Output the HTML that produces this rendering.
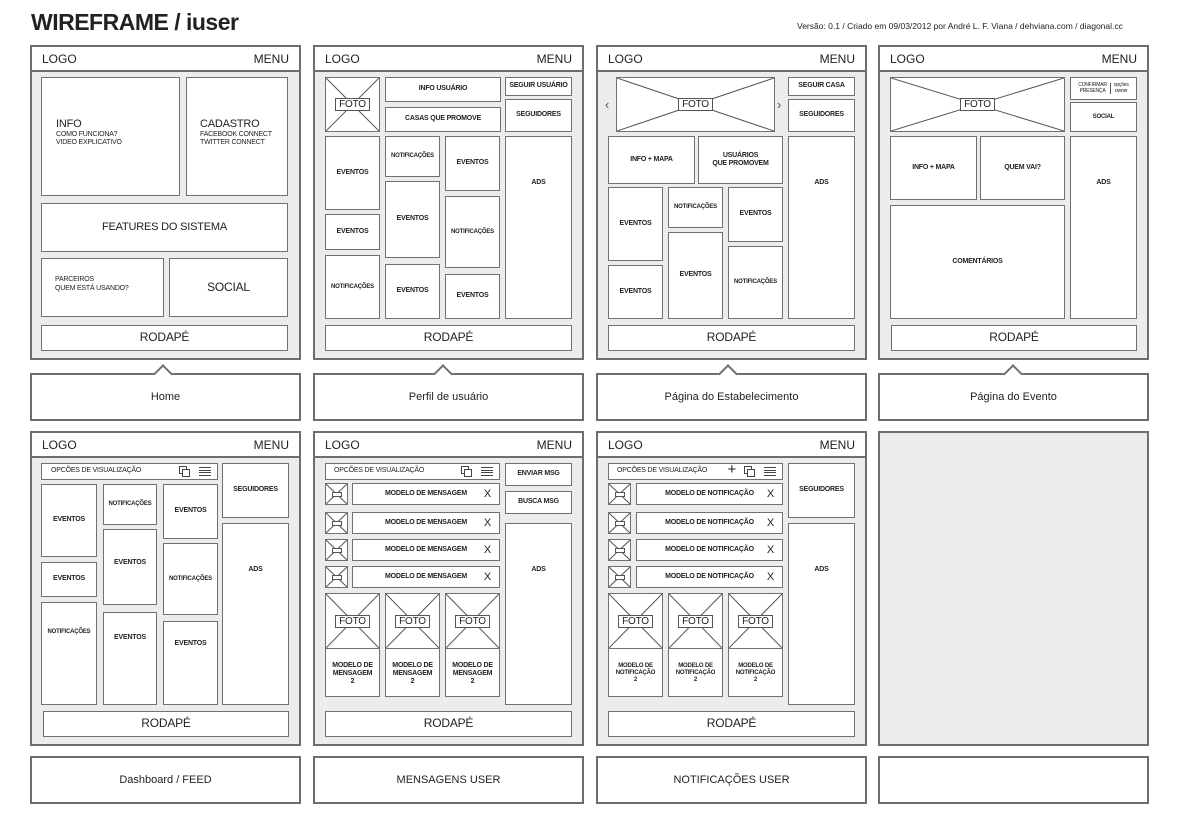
<!DOCTYPE html>
<html><head><meta charset="utf-8"><style>
*{margin:0;padding:0;box-sizing:border-box}
body{width:1200px;height:830px;background:#fff;position:relative;overflow:hidden;font-family:"Liberation Sans",Arial,sans-serif;color:#222}
.a{position:absolute}
.p{position:absolute;background:#ececec;border:2px solid #6e6e6e}
.h{position:absolute;left:0;right:0;top:0;height:25px;background:#fff;border-bottom:2px solid #6e6e6e;font-size:12px;padding:0 10px;display:flex;justify-content:space-between;align-items:center}
.b{position:absolute;background:#fff;border:1.5px solid #707070;display:flex;align-items:center;justify-content:center;text-align:center;font-size:7px;font-weight:bold;line-height:1.15;letter-spacing:-.2px}
.b svg{position:absolute;left:0;top:0;width:100%;height:100%}
.b svg line{stroke:#555;stroke-width:1;vector-effect:non-scaling-stroke}
.ft{position:relative;background:#fff;border:1.3px solid #555;font-size:10px;font-weight:normal;padding:0 3px;line-height:11px}
.th{position:relative;background:#fff;border:1px solid #555;width:10px;height:5px}
.l{position:absolute;background:#fff;border:2px solid #6e6e6e;display:flex;align-items:center;justify-content:center;font-size:11px}
.c{position:absolute;width:14px;height:14px;background:#fff;border-left:2px solid #6e6e6e;border-top:2px solid #6e6e6e;transform:rotate(45deg)}
.rd{font-size:12px;font-weight:normal}
.x{position:absolute;right:8px;font-size:11px;font-weight:normal}
</style></head><body>
<div class="a" style="left:31px;top:9px;font-size:23px;font-weight:bold;letter-spacing:-.5px">WIREFRAME / iuser</div>
<div class="a" style="left:797px;top:21px;font-size:8.5px">Versão: 0.1 / Criado em 09/03/2012 por André L. F. Viana / dehviana.com / diagonal.cc</div>

<!-- panels row 1 -->
<div class="p" style="left:30px;top:45px;width:271px;height:315px"><div class="h"><span>LOGO</span><span>MENU</span></div></div>
<div class="p" style="left:313px;top:45px;width:271px;height:315px"><div class="h"><span>LOGO</span><span>MENU</span></div></div>
<div class="p" style="left:596px;top:45px;width:271px;height:315px"><div class="h"><span>LOGO</span><span>MENU</span></div></div>
<div class="p" style="left:878px;top:45px;width:271px;height:315px"><div class="h"><span>LOGO</span><span>MENU</span></div></div>

<!-- labels row 1 -->
<div class="l" style="left:30px;top:373px;width:271px;height:48px">Home</div>
<div class="l" style="left:313px;top:373px;width:271px;height:48px">Perfil de usuário</div>
<div class="l" style="left:596px;top:373px;width:271px;height:48px">Página do Estabelecimento</div>
<div class="l" style="left:878px;top:373px;width:271px;height:48px">Página do Evento</div>
<div class="c" style="left:156px;top:367px"></div>
<div class="c" style="left:436px;top:367px"></div>
<div class="c" style="left:721px;top:367px"></div>
<div class="c" style="left:1006px;top:367px"></div>

<!-- Home -->
<div class="b" style="left:41px;top:77px;width:139px;height:119px;justify-content:flex-start;text-align:left;padding-left:14px;font-weight:normal;font-size:7px"><div style="margin-top:-8px"><span style="font-size:11px">INFO</span><br>COMO FUNCIONA?<br>VIDEO EXPLICATIVO</div></div>
<div class="b" style="left:186px;top:77px;width:102px;height:119px;justify-content:flex-start;text-align:left;padding-left:13px;font-weight:normal"><div style="margin-top:-8px"><span style="font-size:11px">CADASTRO</span><br>FACEBOOK CONNECT<br>TWITTER CONNECT</div></div>
<div class="b" style="left:41px;top:203px;width:247px;height:49px;font-size:11px;font-weight:normal">FEATURES DO SISTEMA</div>
<div class="b" style="left:41px;top:258px;width:123px;height:59px;justify-content:flex-start;text-align:left;padding-left:13px;font-weight:normal"><div style="margin-top:-6px">PARCEIROS<br>QUEM ESTÁ USANDO?</div></div>
<div class="b" style="left:169px;top:258px;width:119px;height:59px;font-size:12px;font-weight:normal">SOCIAL</div>
<div class="b rd" style="left:41px;top:325px;width:247px;height:26px">RODAPÉ</div>

<!-- Perfil -->
<div class="b" style="left:325px;top:77px;width:55px;height:55px"><svg viewBox="0 0 10 10" preserveAspectRatio="none"><line x1="0" y1="0" x2="10" y2="10"/><line x1="10" y1="0" x2="0" y2="10"/></svg><span class="ft">FOTO</span></div>
<div class="b" style="left:385px;top:77px;width:116px;height:25px">INFO USUÁRIO</div>
<div class="b" style="left:385px;top:107px;width:116px;height:25px">CASAS QUE PROMOVE</div>
<div class="b" style="left:505px;top:77px;width:67px;height:19px">SEGUIR USUÁRIO</div>
<div class="b" style="left:505px;top:99px;width:67px;height:33px">SEGUIDORES</div>
<div class="b" style="left:325px;top:136px;width:55px;height:74px">EVENTOS</div>
<div class="b" style="left:325px;top:214px;width:55px;height:36px">EVENTOS</div>
<div class="b" style="left:325px;top:255px;width:55px;height:64px;font-size:6px">NOTIFICAÇÕES</div>
<div class="b" style="left:385px;top:136px;width:55px;height:41px;font-size:6px;align-items:flex-start;padding-top:16px">NOTIFICAÇÕES</div>
<div class="b" style="left:385px;top:181px;width:55px;height:77px">EVENTOS</div>
<div class="b" style="left:385px;top:264px;width:55px;height:55px">EVENTOS</div>
<div class="b" style="left:445px;top:136px;width:55px;height:55px">EVENTOS</div>
<div class="b" style="left:445px;top:196px;width:55px;height:72px;font-size:6px">NOTIFICAÇÕES</div>
<div class="b" style="left:445px;top:274px;width:55px;height:45px">EVENTOS</div>
<div class="b" style="left:505px;top:136px;width:67px;height:183px;align-items:flex-start;padding-top:42px">ADS</div>
<div class="b rd" style="left:325px;top:325px;width:247px;height:26px">RODAPÉ</div>

<!-- Estabelecimento -->
<div class="a" style="left:605px;top:97px;font-size:13px;color:#555">‹</div>
<div class="a" style="left:777px;top:97px;font-size:13px;color:#555">›</div>
<div class="b" style="left:616px;top:77px;width:159px;height:55px"><svg viewBox="0 0 10 10" preserveAspectRatio="none"><line x1="0" y1="0" x2="10" y2="10"/><line x1="10" y1="0" x2="0" y2="10"/></svg><span class="ft">FOTO</span></div>
<div class="b" style="left:788px;top:77px;width:67px;height:19px">SEGUIR CASA</div>
<div class="b" style="left:788px;top:99px;width:67px;height:33px">SEGUIDORES</div>
<div class="b" style="left:608px;top:136px;width:87px;height:48px">INFO + MAPA</div>
<div class="b" style="left:698px;top:136px;width:85px;height:48px">USUÁRIOS<br>QUE PROMOVEM</div>
<div class="b" style="left:608px;top:187px;width:55px;height:74px">EVENTOS</div>
<div class="b" style="left:608px;top:265px;width:55px;height:54px">EVENTOS</div>
<div class="b" style="left:668px;top:187px;width:55px;height:41px;font-size:6px">NOTIFICAÇÕES</div>
<div class="b" style="left:668px;top:232px;width:55px;height:87px">EVENTOS</div>
<div class="b" style="left:728px;top:187px;width:55px;height:55px">EVENTOS</div>
<div class="b" style="left:728px;top:246px;width:55px;height:73px;font-size:6px">NOTIFICAÇÕES</div>
<div class="b" style="left:788px;top:136px;width:67px;height:183px;align-items:flex-start;padding-top:42px">ADS</div>
<div class="b rd" style="left:608px;top:325px;width:247px;height:26px">RODAPÉ</div>

<!-- Evento -->
<div class="b" style="left:890px;top:77px;width:175px;height:55px"><svg viewBox="0 0 10 10" preserveAspectRatio="none"><line x1="0" y1="0" x2="10" y2="10"/><line x1="10" y1="0" x2="0" y2="10"/></svg><span class="ft">FOTO</span></div>
<div class="b" style="left:1070px;top:77px;width:67px;height:23px;font-size:5px;font-weight:normal"><span style="border-right:1px solid #555;padding-right:3px;margin-right:3px">CONFIRMAR<br>PRESENÇA</span><span>opções<br>owner</span></div>
<div class="b" style="left:1070px;top:102px;width:67px;height:30px;font-size:6px">SOCIAL</div>
<div class="b" style="left:890px;top:136px;width:87px;height:64px">INFO + MAPA</div>
<div class="b" style="left:980px;top:136px;width:85px;height:64px">QUEM VAI?</div>
<div class="b" style="left:890px;top:205px;width:175px;height:114px">COMENTÁRIOS</div>
<div class="b" style="left:1070px;top:136px;width:67px;height:183px;align-items:flex-start;padding-top:42px">ADS</div>
<div class="b rd" style="left:891px;top:325px;width:246px;height:26px">RODAPÉ</div>

<!-- row 2 panels -->
<div class="p" style="left:30px;top:431px;width:271px;height:315px"><div class="h"><span>LOGO</span><span>MENU</span></div></div>
<div class="p" style="left:313px;top:431px;width:271px;height:315px"><div class="h"><span>LOGO</span><span>MENU</span></div></div>
<div class="p" style="left:596px;top:431px;width:271px;height:315px"><div class="h"><span>LOGO</span><span>MENU</span></div></div>
<div class="p" style="left:878px;top:431px;width:271px;height:315px"></div>

<div class="l" style="left:30px;top:756px;width:271px;height:48px">Dashboard / FEED</div>
<div class="l" style="left:313px;top:756px;width:271px;height:48px">MENSAGENS USER</div>
<div class="l" style="left:596px;top:756px;width:271px;height:48px">NOTIFICAÇÕES USER</div>
<div class="l" style="left:878px;top:756px;width:271px;height:48px"></div>

<!-- Dashboard -->
<div class="b" style="left:41px;top:463px;width:177px;height:17px;justify-content:flex-start;padding-left:9px;font-weight:normal">OPCÕES DE VISUALIZAÇÃO<span style="position:absolute;right:30px;top:2px;width:8px;height:8px;border:1px solid #444"></span><span style="position:absolute;right:27px;top:5px;width:8px;height:8px;border:1px solid #444;background:#fff"></span><span style="position:absolute;right:6px;top:3px;width:12px;height:9px;border-top:1px solid #444;border-bottom:1px solid #444"><span style="position:absolute;left:0;right:0;top:2px;height:3px;border-top:1px solid #444;border-bottom:1px solid #444"></span></span></div>
<div class="b" style="left:222px;top:463px;width:67px;height:55px">SEGUIDORES</div>
<div class="b" style="left:222px;top:523px;width:67px;height:182px;align-items:flex-start;padding-top:42px">ADS</div>
<div class="b" style="left:41px;top:484px;width:56px;height:73px">EVENTOS</div>
<div class="b" style="left:41px;top:562px;width:56px;height:35px">EVENTOS</div>
<div class="b" style="left:41px;top:602px;width:56px;height:103px;font-size:6px;align-items:flex-start;padding-top:26px">NOTIFICAÇÕES</div>
<div class="b" style="left:103px;top:484px;width:54px;height:41px;font-size:6px">NOTIFICAÇÕES</div>
<div class="b" style="left:103px;top:529px;width:54px;height:76px;align-items:flex-start;padding-top:29px">EVENTOS</div>
<div class="b" style="left:103px;top:612px;width:54px;height:93px;align-items:flex-start;padding-top:21px">EVENTOS</div>
<div class="b" style="left:163px;top:484px;width:55px;height:55px">EVENTOS</div>
<div class="b" style="left:163px;top:543px;width:55px;height:72px;font-size:6px">NOTIFICAÇÕES</div>
<div class="b" style="left:163px;top:621px;width:55px;height:84px;align-items:flex-start;padding-top:18px">EVENTOS</div>
<div class="b rd" style="left:43px;top:711px;width:246px;height:26px">RODAPÉ</div>

<!-- Mensagens -->
<div class="b" style="left:325px;top:463px;width:175px;height:17px;justify-content:flex-start;padding-left:8px;font-weight:normal">OPCÕES DE VISUALIZAÇÃO<span style="position:absolute;right:30px;top:2px;width:8px;height:8px;border:1px solid #444"></span><span style="position:absolute;right:27px;top:5px;width:8px;height:8px;border:1px solid #444;background:#fff"></span><span style="position:absolute;right:6px;top:3px;width:12px;height:9px;border-top:1px solid #444;border-bottom:1px solid #444"><span style="position:absolute;left:0;right:0;top:2px;height:3px;border-top:1px solid #444;border-bottom:1px solid #444"></span></span></div>
<div class="b" style="left:505px;top:463px;width:67px;height:23px">ENVIAR MSG</div>
<div class="b" style="left:505px;top:491px;width:67px;height:23px">BUSCA MSG</div>
<div class="b" style="left:505px;top:523px;width:67px;height:182px;align-items:flex-start;padding-top:42px">ADS</div>

<div class="b" style="left:325px;top:483px;width:23px;height:22px"><svg viewBox="0 0 10 10" preserveAspectRatio="none"><line x1="0" y1="0" x2="10" y2="10"/><line x1="10" y1="0" x2="0" y2="10"/></svg><span class="th"></span></div>
<div class="b" style="left:352px;top:483px;width:148px;height:22px">MODELO DE MENSAGEM<span class="x">X</span></div>
<div class="b" style="left:325px;top:512px;width:23px;height:22px"><svg viewBox="0 0 10 10" preserveAspectRatio="none"><line x1="0" y1="0" x2="10" y2="10"/><line x1="10" y1="0" x2="0" y2="10"/></svg><span class="th"></span></div>
<div class="b" style="left:352px;top:512px;width:148px;height:22px">MODELO DE MENSAGEM<span class="x">X</span></div>
<div class="b" style="left:325px;top:539px;width:23px;height:22px"><svg viewBox="0 0 10 10" preserveAspectRatio="none"><line x1="0" y1="0" x2="10" y2="10"/><line x1="10" y1="0" x2="0" y2="10"/></svg><span class="th"></span></div>
<div class="b" style="left:352px;top:539px;width:148px;height:22px">MODELO DE MENSAGEM<span class="x">X</span></div>
<div class="b" style="left:325px;top:566px;width:23px;height:22px"><svg viewBox="0 0 10 10" preserveAspectRatio="none"><line x1="0" y1="0" x2="10" y2="10"/><line x1="10" y1="0" x2="0" y2="10"/></svg><span class="th"></span></div>
<div class="b" style="left:352px;top:566px;width:148px;height:22px">MODELO DE MENSAGEM<span class="x">X</span></div>

<div class="b" style="left:325px;top:593px;width:55px;height:104px;align-items:flex-end;padding-bottom:10px">MODELO DE<br>MENSAGEM<br>2</div>
<div class="b" style="left:325px;top:593px;width:55px;height:56px"><svg viewBox="0 0 10 10" preserveAspectRatio="none"><line x1="0" y1="0" x2="10" y2="10"/><line x1="10" y1="0" x2="0" y2="10"/></svg><span class="ft">FOTO</span></div>
<div class="b" style="left:385px;top:593px;width:55px;height:104px;align-items:flex-end;padding-bottom:10px">MODELO DE<br>MENSAGEM<br>2</div>
<div class="b" style="left:385px;top:593px;width:55px;height:56px"><svg viewBox="0 0 10 10" preserveAspectRatio="none"><line x1="0" y1="0" x2="10" y2="10"/><line x1="10" y1="0" x2="0" y2="10"/></svg><span class="ft">FOTO</span></div>
<div class="b" style="left:445px;top:593px;width:55px;height:104px;align-items:flex-end;padding-bottom:10px">MODELO DE<br>MENSAGEM<br>2</div>
<div class="b" style="left:445px;top:593px;width:55px;height:56px"><svg viewBox="0 0 10 10" preserveAspectRatio="none"><line x1="0" y1="0" x2="10" y2="10"/><line x1="10" y1="0" x2="0" y2="10"/></svg><span class="ft">FOTO</span></div>
<div class="b rd" style="left:325px;top:711px;width:247px;height:26px">RODAPÉ</div>

<!-- Notificações -->
<div class="b" style="left:608px;top:463px;width:175px;height:17px;justify-content:flex-start;padding-left:8px;font-weight:normal">OPCÕES DE VISUALIZAÇÃO<span style="position:absolute;right:46px;top:-3px;font-size:15px;font-weight:normal">+</span><span style="position:absolute;right:30px;top:2px;width:8px;height:8px;border:1px solid #444"></span><span style="position:absolute;right:27px;top:5px;width:8px;height:8px;border:1px solid #444;background:#fff"></span><span style="position:absolute;right:6px;top:3px;width:12px;height:9px;border-top:1px solid #444;border-bottom:1px solid #444"><span style="position:absolute;left:0;right:0;top:2px;height:3px;border-top:1px solid #444;border-bottom:1px solid #444"></span></span></div>
<div class="b" style="left:788px;top:463px;width:67px;height:55px">SEGUIDORES</div>
<div class="b" style="left:788px;top:523px;width:67px;height:182px;align-items:flex-start;padding-top:42px">ADS</div>

<div class="b" style="left:608px;top:483px;width:23px;height:22px"><svg viewBox="0 0 10 10" preserveAspectRatio="none"><line x1="0" y1="0" x2="10" y2="10"/><line x1="10" y1="0" x2="0" y2="10"/></svg><span class="th"></span></div>
<div class="b" style="left:636px;top:483px;width:147px;height:22px">MODELO DE NOTIFICAÇÃO<span class="x">X</span></div>
<div class="b" style="left:608px;top:512px;width:23px;height:22px"><svg viewBox="0 0 10 10" preserveAspectRatio="none"><line x1="0" y1="0" x2="10" y2="10"/><line x1="10" y1="0" x2="0" y2="10"/></svg><span class="th"></span></div>
<div class="b" style="left:636px;top:512px;width:147px;height:22px">MODELO DE NOTIFICAÇÃO<span class="x">X</span></div>
<div class="b" style="left:608px;top:539px;width:23px;height:22px"><svg viewBox="0 0 10 10" preserveAspectRatio="none"><line x1="0" y1="0" x2="10" y2="10"/><line x1="10" y1="0" x2="0" y2="10"/></svg><span class="th"></span></div>
<div class="b" style="left:636px;top:539px;width:147px;height:22px">MODELO DE NOTIFICAÇÃO<span class="x">X</span></div>
<div class="b" style="left:608px;top:566px;width:23px;height:22px"><svg viewBox="0 0 10 10" preserveAspectRatio="none"><line x1="0" y1="0" x2="10" y2="10"/><line x1="10" y1="0" x2="0" y2="10"/></svg><span class="th"></span></div>
<div class="b" style="left:636px;top:566px;width:147px;height:22px">MODELO DE NOTIFICAÇÃO<span class="x">X</span></div>

<div class="b" style="left:608px;top:593px;width:55px;height:104px;align-items:flex-end;padding-bottom:12px;font-size:6px">MODELO DE<br>NOTIFICAÇÃO<br>2</div>
<div class="b" style="left:608px;top:593px;width:55px;height:56px"><svg viewBox="0 0 10 10" preserveAspectRatio="none"><line x1="0" y1="0" x2="10" y2="10"/><line x1="10" y1="0" x2="0" y2="10"/></svg><span class="ft">FOTO</span></div>
<div class="b" style="left:668px;top:593px;width:55px;height:104px;align-items:flex-end;padding-bottom:12px;font-size:6px">MODELO DE<br>NOTIFICAÇÃO<br>2</div>
<div class="b" style="left:668px;top:593px;width:55px;height:56px"><svg viewBox="0 0 10 10" preserveAspectRatio="none"><line x1="0" y1="0" x2="10" y2="10"/><line x1="10" y1="0" x2="0" y2="10"/></svg><span class="ft">FOTO</span></div>
<div class="b" style="left:728px;top:593px;width:55px;height:104px;align-items:flex-end;padding-bottom:12px;font-size:6px">MODELO DE<br>NOTIFICAÇÃO<br>2</div>
<div class="b" style="left:728px;top:593px;width:55px;height:56px"><svg viewBox="0 0 10 10" preserveAspectRatio="none"><line x1="0" y1="0" x2="10" y2="10"/><line x1="10" y1="0" x2="0" y2="10"/></svg><span class="ft">FOTO</span></div>
<div class="b rd" style="left:608px;top:711px;width:247px;height:26px">RODAPÉ</div>
</body></html>
